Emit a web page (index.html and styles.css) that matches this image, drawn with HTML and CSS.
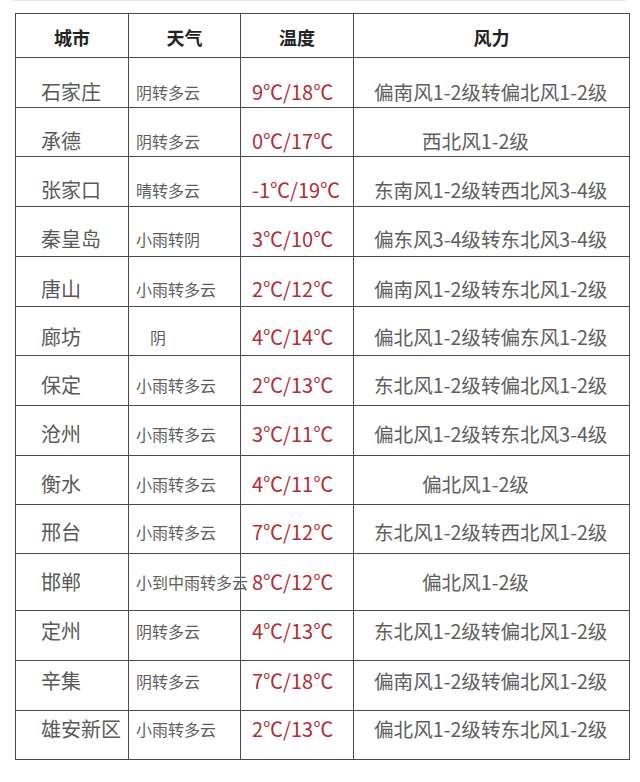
FILE: index.html
```html
<!DOCTYPE html>
<html lang="zh-CN">
<head>
<meta charset="utf-8">
<title>河北天气</title>
<link rel="stylesheet" href="styles.css">
</head>
<body>
<div class="top-strip"></div>
<table class="weather">
  <colgroup>
    <col class="c-city"><col class="c-wx"><col class="c-temp"><col class="c-wind">
  </colgroup>
  <thead>
    <tr><th>城市</th><th>天气</th><th>温度</th><th>风力</th></tr>
  </thead>
  <tbody>
    <tr><td class="city">石家庄</td><td class="wx">阴转多云</td><td class="temp">9℃/18℃</td><td class="wind">偏南风1-2级转偏北风1-2级</td></tr>
    <tr><td class="city">承德</td><td class="wx">阴转多云</td><td class="temp">0℃/17℃</td><td class="wind short">西北风1-2级</td></tr>
    <tr><td class="city">张家口</td><td class="wx">晴转多云</td><td class="temp">-1℃/19℃</td><td class="wind">东南风1-2级转西北风3-4级</td></tr>
    <tr><td class="city">秦皇岛</td><td class="wx">小雨转阴</td><td class="temp">3℃/10℃</td><td class="wind">偏东风3-4级转东北风3-4级</td></tr>
    <tr><td class="city">唐山</td><td class="wx">小雨转多云</td><td class="temp">2℃/12℃</td><td class="wind">偏南风1-2级转东北风1-2级</td></tr>
    <tr><td class="city">廊坊</td><td class="wx indent">阴</td><td class="temp">4℃/14℃</td><td class="wind">偏北风1-2级转偏东风1-2级</td></tr>
    <tr><td class="city">保定</td><td class="wx">小雨转多云</td><td class="temp">2℃/13℃</td><td class="wind">东北风1-2级转偏北风1-2级</td></tr>
    <tr><td class="city">沧州</td><td class="wx">小雨转多云</td><td class="temp">3℃/11℃</td><td class="wind">偏北风1-2级转东北风3-4级</td></tr>
    <tr><td class="city">衡水</td><td class="wx">小雨转多云</td><td class="temp">4℃/11℃</td><td class="wind short">偏北风1-2级</td></tr>
    <tr><td class="city">邢台</td><td class="wx">小雨转多云</td><td class="temp">7℃/12℃</td><td class="wind">东北风1-2级转西北风1-2级</td></tr>
    <tr><td class="city">邯郸</td><td class="wx">小到中雨转多云</td><td class="temp">8℃/12℃</td><td class="wind short">偏北风1-2级</td></tr>
    <tr><td class="city">定州</td><td class="wx">阴转多云</td><td class="temp">4℃/13℃</td><td class="wind">东北风1-2级转偏北风1-2级</td></tr>
    <tr><td class="city">辛集</td><td class="wx">阴转多云</td><td class="temp">7℃/18℃</td><td class="wind">偏南风1-2级转偏北风1-2级</td></tr>
    <tr><td class="city">雄安新区</td><td class="wx">小雨转多云</td><td class="temp">2℃/13℃</td><td class="wind">偏北风1-2级转东北风1-2级</td></tr>
  </tbody>
</table>
</body>
</html>
```

FILE: styles.css
```css
html, body {
  margin: 0;
  padding: 0;
  background: #ffffff;
}
body {
  width: 640px;
  height: 782px;
  overflow: hidden;
  font-family: "Noto Sans CJK SC", "Noto Sans", sans-serif;
  color: #585858;
}
.top-strip {
  height: 1px;
  margin: 0 14px 0 12px;
  background: #e6e8ea;
}
.weather {
  margin: 12px 0 0 15px;
  border-collapse: collapse;
  table-layout: fixed;
  width: 614px;
}
.c-city { width: 113px; }
.c-wx { width: 112px; }
.c-temp { width: 113px; }
.c-wind { width: 276px; }

.weather th,
.weather td {
  border: 1px solid #4a4a4a;
  white-space: nowrap;
  overflow: visible;
}
.weather th {
  height: 44px;
  padding: 3px 0 0;
  font-size: 18px;
  font-weight: 700;
  color: #222;
  text-align: center;
  vertical-align: middle;
  line-height: 20px;
  box-sizing: border-box;
}
.weather td {
  padding-right: 0;
  padding-bottom: 0;
  vertical-align: top;
  line-height: 20px;
  text-align: left;
  box-sizing: border-box;
}
.weather td.city { font-size: 20px; padding-left: 25px; color: #595959; }
.weather td.wx { font-size: 16px; padding-left: 7px; color: #5e5e5e; }
.weather td.wx.indent { padding-left: 21px; }
.weather td.temp { font-size: 20px; padding-left: 11px; color: #b42d35; }
.weather td.wind { font-size: 19.6px; padding-left: 20px; color: #5e5e5e; }
.weather td.wind.short { padding-left: 68px; }

.weather tbody tr:nth-child(1) td { height: 50px; padding-top: 24px; }
.weather tbody tr:nth-child(2) td { height: 49px; padding-top: 23px; }
.weather tbody tr:nth-child(3) td { height: 50px; padding-top: 23px; }
.weather tbody tr:nth-child(4) td { height: 50px; padding-top: 22px; }
.weather tbody tr:nth-child(5) td { height: 50px; padding-top: 22px; }
.weather tbody tr:nth-child(6) td { height: 49px; padding-top: 20px; }
.weather tbody tr:nth-child(7) td { height: 50px; padding-top: 19px; }
.weather tbody tr:nth-child(8) td { height: 50px; padding-top: 18px; }
.weather tbody tr:nth-child(9) td { height: 49px; padding-top: 18px; }
.weather tbody tr:nth-child(10) td { height: 49px; padding-top: 17px; }
.weather tbody tr:nth-child(11) td { height: 57px; padding-top: 18px; }
.weather tbody tr:nth-child(12) td { height: 50px; padding-top: 10px; }
.weather tbody tr:nth-child(13) td { height: 50px; padding-top: 10px; }
.weather tbody tr:nth-child(14) td { height: 49px; padding-top: 8px; }
```
